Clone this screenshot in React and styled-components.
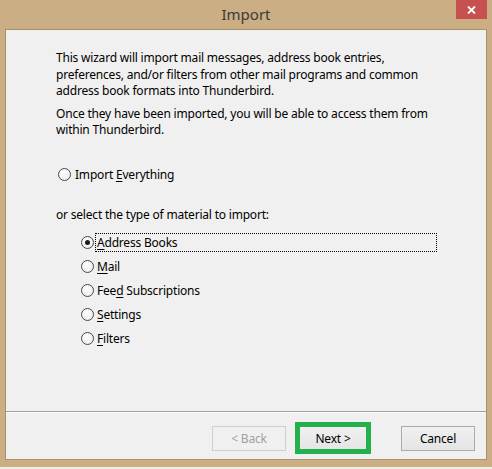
import styled, { createGlobalStyle } from "styled-components";

const GlobalStyle = createGlobalStyle`
  html, body {
    margin: 0;
    padding: 0;
    background: #eeeeee;
  }
  body {
    font-family: "Noto Sans", "Open Sans", sans-serif;
    font-size: 12px;
    letter-spacing: -0.2px;
    color: #000;
  }
`;

const Window = styled("div")`
  width: 492px;
  height: 467px;
  background: #cbae84;
  display: flex;
  flex-direction: column;
  box-sizing: border-box;
  padding: 0 5px 7px 5px;
`;

const TitleBar = styled("div")`
  height: 29px;
  position: relative;
  display: flex;
  align-items: center;
  justify-content: center;
  font-size: 15px;
  letter-spacing: 0;
  color: #3a3a3a;
  padding-bottom: 2px;
  box-sizing: border-box;
`;

const CloseButton = styled("div")`
  position: absolute;
  top: 0;
  right: 0;
  width: 31px;
  height: 19px;
  background: #c75050;
  display: flex;
  align-items: center;
  justify-content: center;
`;

const Client = styled("div")`
  flex: 1;
  background: #f0f0f0;
  border: 1px solid #a8916d;
  display: flex;
  flex-direction: column;
`;

const Content = styled("div")`
  flex: 1;
  padding: 20px 0 0 50px;
`;

const Paragraph = styled("p")`
  margin: ${(props) => props.gap || 0}px 0 0 0;
  line-height: 16.5px;
  width: 375px;
`;

const RadioRow = styled("div")`
  display: flex;
  align-items: center;
  height: 19px;
  margin-top: ${(props) => props.gap || 0}px;
  margin-left: ${(props) => props.indent || 0}px;
`;

const RadioCircle = styled("span")`
  width: 11px;
  height: 11px;
  border-radius: 50%;
  border: 1px solid #4a4a4a;
  background: radial-gradient(circle at 40% 35%, #ffffff, #e6e6e6);
  margin: 0 ${(props) => (props.tight ? 1 : 2)}px 0 2px;
  display: flex;
  align-items: center;
  justify-content: center;
  flex-shrink: 0;
  &::after {
    content: "";
    width: 5px;
    height: 5px;
    border-radius: 50%;
    background: ${(props) => (props.checked ? "#1a1a1a" : "transparent")};
  }
`;

const Label = styled("span")`
  height: 17px;
  line-height: 17px;
  padding: 0 1px;
  border: 1px dotted ${(props) => (props.focused ? "#000" : "transparent")};
  width: ${(props) => (props.focused ? "338px" : "auto")};
`;

const Key = styled("span")`
  text-decoration: underline;
  text-underline-offset: 2px;
`;

const Separator = styled("div")`
  height: 1px;
  background: #a0a0a0;
  border-bottom: 1px solid #fbfbfb;
`;

const Footer = styled("div")`
  height: 46px;
  display: flex;
  justify-content: flex-end;
  align-items: center;
  padding: 4px 11px 0 0;
  box-sizing: border-box;
`;

const Button = styled("div")`
  width: 74px;
  height: 25px;
  box-sizing: border-box;
  border: 1px solid ${(props) => (props.disabled ? "#cfcfcf" : "#acacac")};
  background: ${(props) =>
    props.disabled ? "#f0f0f0" : "linear-gradient(#f0f0f0, #e5e5e5)"};
  color: ${(props) => (props.disabled ? "#a0a0a0" : "#000")};
  display: flex;
  align-items: center;
  justify-content: center;
  margin-left: ${(props) => props.gap || 0}px;
`;

const Highlight = styled("div")`
  width: 76px;
  height: 32px;
  box-sizing: border-box;
  border: 5px solid #22b14c;
  background: linear-gradient(#f0f0f0, #e5e5e5);
  display: flex;
  align-items: center;
  justify-content: center;
  margin-left: ${(props) => props.gap || 0}px;
`;

const Radio = ({ checked, focused, gap, indent, children }) => (
  <RadioRow gap={gap} indent={indent}>
    <RadioCircle checked={checked} tight={indent > 0} />
    <Label focused={focused}>{children}</Label>
  </RadioRow>
);

const App = () => (
  <>
    <GlobalStyle />
    <Window>
      <TitleBar>
        Import
        <CloseButton>
          <svg width="9" height="8" viewBox="0 0 9 8">
            <path d="M1 0.5 L8 7.5 M8 0.5 L1 7.5" stroke="#fff" strokeWidth="1.8" />
          </svg>
        </CloseButton>
      </TitleBar>
      <Client>
        <Content>
          <Paragraph>
            This wizard will import mail messages, address book entries,
            preferences, and/or filters from other mail programs and common
            address book formats into Thunderbird.
          </Paragraph>
          <Paragraph gap={6}>
            Once they have been imported, you will be able to access them from
            within Thunderbird.
          </Paragraph>
          <Radio gap={26}>
            Import <Key>E</Key>verything
          </Radio>
          <Paragraph gap={23}>or select the type of material to import:</Paragraph>
          <Radio gap={10} indent={23} checked focused>
            <Key>A</Key>ddress Books
          </Radio>
          <Radio gap={5} indent={23}>
            <Key>M</Key>ail
          </Radio>
          <Radio gap={5} indent={23}>
            Fee<Key>d</Key> Subscriptions
          </Radio>
          <Radio gap={5} indent={23}>
            <Key>S</Key>ettings
          </Radio>
          <Radio gap={5} indent={23}>
            <Key>F</Key>ilters
          </Radio>
        </Content>
        <Separator />
        <Footer>
          <Button disabled>&lt; Back</Button>
          <Highlight gap={9}>Next &gt;</Highlight>
          <Button gap={30}>Cancel</Button>
        </Footer>
      </Client>
    </Window>
  </>
);

export default App;
